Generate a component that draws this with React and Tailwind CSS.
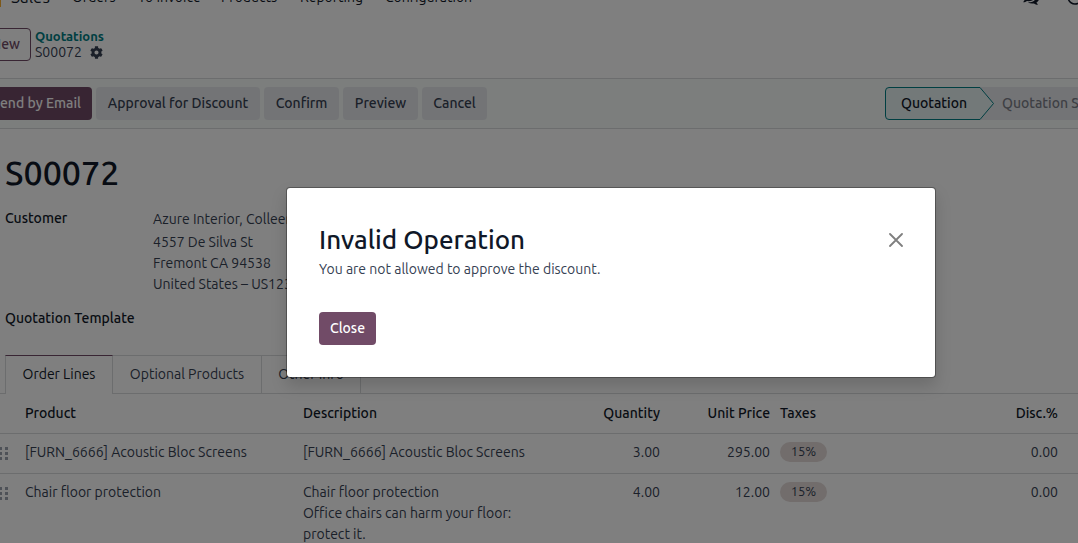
import { FaCog, FaRegClock } from "react-icons/fa";

const menus = [
  { label: "Orders", width: "w-[66px]" },
  { label: "To Invoice", width: "w-[83px]" },
  { label: "Products", width: "w-[79px]" },
  { label: "Reporting", width: "w-[85px]" },
  { label: "Configuration", width: "w-[110px]" },
];

const actions = [
  { label: "Approval for Discount", width: "w-[164px]" },
  { label: "Confirm", width: "w-[75px]" },
  { label: "Preview", width: "w-[75px]" },
  { label: "Cancel", width: "w-[65px]" },
];

const lines = [
  {
    product: "[FURN_6666] Acoustic Bloc Screens",
    description: ["[FURN_6666] Acoustic Bloc Screens"],
    quantity: "3.00",
    price: "295.00",
    tax: "15%",
    discount: "0.00",
  },
  {
    product: "Chair floor protection",
    description: ["Chair floor protection", "Office chairs can harm your floor:", "protect it."],
    quantity: "4.00",
    price: "12.00",
    tax: "15%",
    discount: "0.00",
  },
];

function DragHandle() {
  return (
    <svg className="block h-[13px] w-2" viewBox="0 0 8 13" fill="#9ca3af" aria-hidden="true">
      {[0, 5, 10].map((y) => (
        <g key={y}>
          <rect x="-1" y={y} width="3" height="3" />
          <rect x="5" y={y} width="3" height="3" />
        </g>
      ))}
    </svg>
  );
}

function CommentsIcon() {
  return (
    <svg width="17" height="17" viewBox="0 0 1792 1792" fill="currentColor" aria-hidden="true">
      <path d="M1408 768q0 139-94 257t-256.500 186.500-353.500 68.500q-86 0-176-16-124 88-278 128-36 9-86 16h-3q-11 0-20.500-8t-11.500-21q-1-3-1-6.500t.5-6.500 2-6l2.500-5 3.500-5.500 4-5 4.500-5 4-4.500q5-6 23-25t26-29.500 22.500-29 25-38.500 20.500-44q-124-72-195-177t-71-224q0-139 94-257t256.500-186.500 353.500-68.500 353.500 68.500 256.500 186.500 94 257zm384 256q0 120-71 224.500t-195 176.500q10 24 20.500 44t25 38.500 22.500 29 26 29.500 23 25q1 1 4 4.500t4.500 5 4 5 3.500 5.500l2.500 5 2 6 .5 6.500-1 6.500q-3 14-13 22t-22 7q-50-7-86-16-154-40-278-128-90 16-176 16-271 0-472-132 58 4 88 4 161 0 309-45t264-129q125-92 192-212t67-254q0-77-23-152 129 71 204 178t75 230z" />
    </svg>
  );
}

function NavBar() {
  return (
    <nav className="-mt-[26px] flex h-[46px] items-center whitespace-nowrap text-gray-900">
      <span className="h-[20px] w-px bg-[#fbb130]" />
      <a href="#sales" className="ml-[10px] w-[61px] text-[17px] text-gray-900">
        Sales
      </a>
      {menus.map((m) => (
        <a key={m.label} href="#menu" className={m.width}>
          {m.label}
        </a>
      ))}
      <div className="-mr-[5px] ml-auto flex items-center gap-7">
        <button type="button" aria-label="Messages">
          <CommentsIcon />
        </button>
        <button type="button" aria-label="Activities">
          <FaRegClock size={16} />
        </button>
      </div>
    </nav>
  );
}

function ControlPanel() {
  return (
    <header className="flex h-[59px] items-start gap-1 border-b border-[#d8dadd] pt-2">
      <button
        type="button"
        className="-ml-6 h-[33px] w-[55px] rounded-[4px] border border-[#714b67] pr-[10px] text-right font-[550] text-[#714b67]"
      >
        New
      </button>
      <div className="leading-4">
        <a href="#quotations" className="block text-[13px] font-semibold text-[#017e84]">
          Quotations
        </a>
        <div className="flex items-center gap-2 text-gray-700">
          <span>S00072</span>
          <button type="button" aria-label="Actions" className="text-gray-700">
            <FaCog size={13} />
          </button>
        </div>
      </div>
    </header>
  );
}

function StatusBar() {
  return (
    <div className="flex h-[50px] items-center justify-between border-b border-[#d8dadd] bg-[#f8fcfa]">
      <div className="flex gap-1 whitespace-nowrap font-[550]">
        <button
          type="button"
          className="-ml-[25px] h-[33px] w-[117px] rounded-[4px] bg-[#714b67] pr-[11px] text-right text-white"
        >
          Send by Email
        </button>
        {actions.map((a) => (
          <button
            key={a.label}
            type="button"
            className={`${a.width} h-[33px] rounded-[4px] bg-[#e7e9ed] text-gray-700`}
          >
            {a.label}
          </button>
        ))}
      </div>
      <div className="flex w-[193px] shrink-0 overflow-hidden whitespace-nowrap font-[550]">
        <button type="button" className="relative h-[33px] w-[109px] shrink-0 pl-4 text-left text-gray-900">
          <svg className="absolute inset-0" width="109" height="33" viewBox="0 0 109 33" aria-hidden="true">
            <path d="M94 0H109V33H94Z" fill="#e7e9ed" />
            <path
              d="M4 .5H95L108.500 16.500L95 32.500H4A3.500 3.500 0 0 1 .5 29V4A3.500 3.500 0 0 1 4 .5Z"
              fill="#e6f2f3"
              stroke="#017e84"
            />
          </svg>
          <span className="relative">Quotation</span>
        </button>
        <button type="button" className="h-[33px] w-[130px] shrink-0 bg-[#e7e9ed] pl-2 text-left text-[#7c7f89]">
          Quotation Sent
        </button>
      </div>
    </div>
  );
}

function Fields() {
  return (
    <section className="px-[5px] pt-[22px] text-gray-700">
      <h1 className="text-[34px] font-[550] leading-[42px] text-gray-900">S00072</h1>
      <dl className="mt-[15px] grid grid-cols-[148px_1fr] whitespace-nowrap leading-[21px]">
        <dt className="font-[550] text-gray-900">Customer</dt>
        <dd className="pt-px">
          <div className="mb-[2px]">Azure Interior, Colleen Diaz</div>
          <div>4557 De Silva St</div>
          <div>Fremont CA 94538</div>
          <div>United States – US12345673</div>
        </dd>
        <dt className="mt-[13px] font-[550] text-gray-900">Quotation Template</dt>
        <dd />
      </dl>
    </section>
  );
}

function Tabs() {
  return (
    <div role="tablist" className="mt-[26px] flex h-[39px] whitespace-nowrap text-gray-700">
      <span className="w-[5px] border-b border-[#d8dadd]" />
      <button
        type="button"
        role="tab"
        aria-selected="true"
        className="w-[108px] border-x border-t border-x-[#d8dadd] border-t-[#714b67] pb-px text-gray-900"
      >
        Order Lines
      </button>
      <button type="button" role="tab" aria-selected="false" className="w-[149px] border-y border-r border-[#d8dadd]">
        Optional Products
      </button>
      <button type="button" role="tab" aria-selected="false" className="w-[99px] border-y border-r border-[#d8dadd]">
        Other Info
      </button>
      <span className="flex-1 border-b border-[#d8dadd]" />
    </div>
  );
}

function OrderLines() {
  return (
    <table className="w-full table-fixed border-collapse leading-[21px] text-gray-700">
      <colgroup>
        <col className="w-[25px]" />
        <col className="w-[278px]" />
        <col className="w-[240px]" />
        <col className="w-[117px]" />
        <col className="w-[110px]" />
        <col className="w-[180px]" />
        <col />
      </colgroup>
      <thead>
        <tr className="h-[39px] border-b border-[#d8dadd] text-left text-gray-900 [&>th]:font-[550]">
          <th aria-label="Reorder" />
          <th>Product</th>
          <th>Description</th>
          <th className="text-right">Quantity</th>
          <th className="text-right">Unit Price</th>
          <th className="pl-[10px]">Taxes</th>
          <th className="pr-5 text-right">Disc.%</th>
        </tr>
      </thead>
      <tbody>
        {lines.map((l) => (
          <tr key={l.product} className="border-b border-[#d8dadd] align-top [&>td]:pb-[10px] [&>td]:pt-2">
            <td>
              <div className="pt-[5px]">
                <DragHandle />
              </div>
            </td>
            <td>{l.product}</td>
            <td>
              {l.description.map((d) => (
                <div key={d} className="whitespace-nowrap">
                  {d}
                </div>
              ))}
            </td>
            <td className="text-right">{l.quantity}</td>
            <td className="text-right">{l.price}</td>
            <td className="pl-[10px]">
              <span className="flex h-5 w-[47px] items-center justify-center rounded-full bg-[#e4dbd9] text-[13px]">
                {l.tax}
              </span>
            </td>
            <td className="pr-5 text-right">{l.discount}</td>
          </tr>
        ))}
      </tbody>
    </table>
  );
}

function ErrorDialog() {
  return (
    <div className="absolute inset-0 flex items-start justify-center bg-black/50 pl-36 pt-[187px]">
      <div
        role="dialog"
        aria-modal="true"
        aria-labelledby="dialog-title"
        className="w-[650px] rounded-[4px] border border-black/30 bg-white bg-clip-padding px-8 pb-8 pt-9 shadow-[0_8px_16px_rgba(0,0,0,0.15)]"
      >
        <div className="flex items-center justify-between">
          <h2 id="dialog-title" className="text-[26px] font-[550] leading-8 text-gray-900">
            Invalid Operation
          </h2>
          <button type="button" aria-label="Dismiss">
            <svg width="14" height="14" viewBox="0 0 14 14" stroke="#7f7f7f" strokeWidth="1.800" strokeLinecap="round" aria-hidden="true">
              <path d="M1 1L13 13M13 1L1 13" />
            </svg>
          </button>
        </div>
        <p className="mt-[3px] leading-[21px] text-gray-700">You are not allowed to approve the discount.</p>
        <button type="button" className="mt-8 block h-[33px] w-[57px] rounded-[4px] bg-[#714b67] font-[550] text-white">
          Close
        </button>
      </div>
    </div>
  );
}

export default function App() {
  return (
    <div className="relative h-screen overflow-hidden bg-white font-['Ubuntu','Noto_Sans',sans-serif] text-[14px]">
      <div className="flow-root">
        <NavBar />
        <ControlPanel />
        <StatusBar />
        <Fields />
        <Tabs />
        <OrderLines />
      </div>
      <ErrorDialog />
    </div>
  );
}
